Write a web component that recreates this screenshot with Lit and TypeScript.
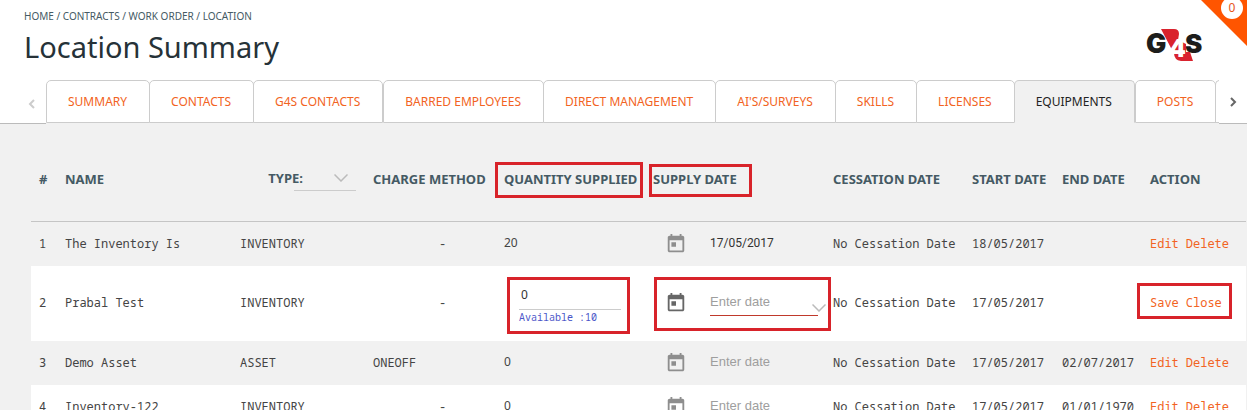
import { LitElement, html, css, nothing } from "lit";
import { customElement, state } from "lit/decorators.js";

interface Equipment {
  name: string;
  type: string;
  charge: string;
  quantity: number;
  supply: string;
  start: string;
  end: string;
  editing?: boolean;
  available?: number;
}

const TABS = [
  "Summary", "Contacts", "G4S Contacts", "Barred Employees", "Direct Management",
  "AI's/Surveys", "Skills", "Licenses", "Equipments", "Posts",
];

const ROWS: Equipment[] = [
  { name: "The Inventory Is", type: "INVENTORY", charge: "", quantity: 20, supply: "17/05/2017", start: "18/05/2017", end: "" },
  { name: "Prabal Test", type: "INVENTORY", charge: "", quantity: 0, supply: "", start: "17/05/2017", end: "", editing: true, available: 10 },
  { name: "Demo Asset", type: "ASSET", charge: "ONEOFF", quantity: 0, supply: "", start: "17/05/2017", end: "02/07/2017" },
  { name: "Inventory-122", type: "INVENTORY", charge: "", quantity: 0, supply: "", start: "17/05/2017", end: "01/01/1970" },
];

const calendar = html`<svg class="cal" viewBox="0 0 24 24" aria-hidden="true">
  <path d="M19 3h-1V1h-2v2H8V1H6v2H5c-1.100 0-2 .9-2 2v14c0 1.100.9 2 2 2h14c1.100 0 2-.9 2-2V5c0-1.100-.9-2-2-2zm0 16H5V8h14v11zM7 10h5v5H7z"/>
</svg>`;

const chevron = html`<svg class="chev" viewBox="0 0 14 8" aria-hidden="true"><path d="M.5.5 7 7 13.500.5"/></svg>`;

@customElement("g4s-logo")
export class G4sLogo extends LitElement {
  static styles = css`
    :host { display: block; width: 56px; height: 34px; }
    svg { display: block; width: 100%; height: 100%; overflow: visible; }
    .letter { font-family: Inter, "Liberation Sans", sans-serif; font-weight: 900; }
    .dark { fill: #1d1d1b; }
    .red { fill: #d9232e; }
    .white { fill: #fff; }
  `;
  render() {
    return html`<svg viewBox="0 0 56 34" role="img" aria-label="G4S">
      <text class="letter dark" x="-1" y="25" font-size="27">G</text>
      <text class="letter dark" x="38" y="25" font-size="26">S</text>
      <path class="red" d="M14 1H27Q32 1 32 6L31 12 39 16V24H43L46 33H34Q27 32 27 25L24 20Z"/>
      <text class="letter white" x="22" y="29" font-size="24">4</text>
    </svg>`;
  }
}

@customElement("app-root")
export class AppRoot extends LitElement {
  @state() private active = "Equipments";

  static styles = css`
    :host {
      display: flex;
      flex-direction: column;
      height: 100vh;
      overflow: hidden;
      background: #fff;
      font-family: "Noto Sans", sans-serif;
      color: #333;
    }
    * { box-sizing: border-box; }
    a { color: inherit; text-decoration: none; }
    header {
      position: relative;
      display: flex;
      justify-content: space-between;
      height: 80px;
      flex: none;
      padding: 8px 44px 0 24px;
    }
    .crumbs { font-size: 10px; line-height: 16px; color: #455a64; text-transform: uppercase; }
    h1 { margin: 0; font-size: 29px; line-height: 46px; font-weight: 400; color: #263238; white-space: nowrap; }
    g4s-logo { margin-top: 20px; }
    .corner { position: absolute; top: 0; right: 0; width: 46px; height: 46px; background: #ff5500; clip-path: polygon(0 0, 100% 0, 100% 100%); }
    .badge { position: absolute; top: -3px; right: 4px; width: 22px; height: 22px; padding: 0; border: 0; border-radius: 50%; background: #fff; color: #e65419; font: 12px/22px "Noto Sans", sans-serif; text-align: center; }

    .strip { display: flex; height: 44px; flex: none; }
    .arrow { width: 46px; flex: none; border: 0; border-bottom: 1px solid #bbb; background: #fff; padding: 4px 0 0 16px; display: flex; align-items: center; justify-content: center; }
    .arrow.next { width: 28px; padding: 0; }
    .arrow svg { width: 7px; height: 10px; fill: none; stroke: #666; stroke-width: 2; }
    .arrow.prev svg { stroke: #ccc; }
    .tabs { display: flex; flex: 1; min-width: 0; overflow: hidden; background: linear-gradient(#fff 43px, #f1f1f1 43px); }
    .tab { flex: none; height: 43px; padding: 0 22px 0 21px; border: 1px solid #ccc; margin-right: -1px; border-radius: 5px 5px 0 0; background: #fff; color: #f26322; font: 12px/41px "Noto Sans", sans-serif; text-transform: uppercase; white-space: nowrap; }
    .tab.on { background: #f1f1f1; border-bottom-color: #f1f1f1; color: #222; }
    .tab.on + .tab, .tab:nth-child(4) { margin-left: 1px; }
    .more { flex: 1 0 20px; height: 43px; border: 1px solid #ccc; border-right: 0; border-radius: 5px 0 0 0; }

    main { flex: 1; min-height: 0; overflow: hidden; background: #f1f1f1; padding: 13px 1px 0 31px; }
    table { width: 100%; table-layout: fixed; border-collapse: separate; border-spacing: 0; }
    th, td { padding: 0 0 0 8px; text-align: left; vertical-align: middle; white-space: nowrap; }
    th { height: 85px; border-bottom: 1px solid #c5c5c5; font-size: 13px; line-height: 20px; font-weight: 700; color: #455a64; text-transform: uppercase; }
    td { height: 44px; font: 12px/20px "Noto Sans Mono", "DejaVu Sans Mono", monospace; color: #444; }
    tbody tr:nth-child(even) td { background: #fff; }
    .editing td { height: 75px; padding-bottom: 1px; }
    .c-num { width: 26px; } .c-type { width: 133px; } .c-charge { width: 131px; } .c-qty { width: 149px; }
    .c-supply { width: 180px; } .c-cess { width: 139px; } .c-start { width: 90px; } .c-end { width: 88px; } .c-act { width: 104px; }
    .dash { padding-left: 74px; }

    .typehead { display: flex; justify-content: flex-end; padding-right: 9px; }
    .pick { position: relative; display: flex; width: 62px; margin-left: -9px; border-bottom: 1px solid #ccc; }
    select { width: 100%; border: 0; background: none; appearance: none; height: 22px; padding: 0; outline: 0; }
    .chev { flex: none; width: 14px; height: 8px; fill: none; stroke: #bbb; stroke-width: 1.500; pointer-events: none; }
    .pick .chev { position: absolute; right: 8px; top: 6px; }

    .qty { padding-bottom: 2px; font: 12px/20px "Noto Sans", sans-serif; }
    .editing .qty { padding-bottom: 0; }
    .edit { width: 102px; margin-left: 15px; }
    .edit input { display: block; width: 100%; height: 26px; border: 0; border-bottom: 1px solid #ccc; padding: 0 2px 4px; background: none; font: 12px/20px "Noto Sans", sans-serif; color: #333; }
    .hint { display: block; font: 10px/14px "Noto Sans Mono", "DejaVu Sans Mono", monospace; color: #4a55c8; }
    .supply { display: flex; align-items: center; height: 26px; padding-left: 12px; }
    .supply input { width: 108px; flex: none; height: 26px; margin-left: 23px; border: 0; border-bottom: 1px solid transparent; padding: 0 0 1px; background: none; outline: 0; font: 12px/20px Roboto, sans-serif; color: #333; }
    .supply input::placeholder { color: #9e9e9e; opacity: 1; font: 13px/20px "Liberation Sans", sans-serif; }
    .supply .chev { margin: 10px 0 0 -6px; }
    .cal { width: 22px; height: 22px; flex: none; fill: #8e8e8e; }
    .editing .cal { fill: #666; }
    .editing .supply input { border-bottom-color: #c0392b; }
    .acts { display: inline-flex; gap: 7px; color: #f26322; }

    .mark { position: relative; }
    .mark::after { content: ""; position: absolute; border: 3px solid #d8232a; pointer-events: none; }
    .m-qty::after { inset: -8px -6px -10px -9px; }
    .m-date::after { inset: -6px -15px -9px -4px; }
    .edit.mark::after { inset: -7px -9px -10px -12px; }
    .supply.mark::after { inset: -13px -6px -15px 1px; }
    .acts.mark::after { inset: -10px -10px -6px -13px; }
  `;

  private row(r: Equipment, i: number) {
    return html`<tr class=${r.editing ? "editing" : ""}>
      <td>${i + 1}</td>
      <td>${r.name}</td>
      <td>${r.type}</td>
      <td class=${r.charge ? "" : "dash"}>${r.charge || "-"}</td>
      <td class="qty">${r.editing
        ? html`<div class="edit mark"><input aria-label="Quantity supplied" .value=${String(r.quantity)} /><span class="hint">Available :${r.available}</span></div>`
        : r.quantity}</td>
      <td><div class="supply ${r.editing ? "mark" : ""}">${calendar}<input aria-label="Supply date" placeholder="Enter date" .value=${r.supply} />${r.editing ? chevron : nothing}</div></td>
      <td>No Cessation Date</td>
      <td>${r.start}</td>
      <td>${r.end}</td>
      <td>${r.editing
        ? html`<span class="acts mark"><a href="#save">Save</a><a href="#close">Close</a></span>`
        : html`<span class="acts"><a href="#edit">Edit</a><a href="#delete">Delete</a></span>`}</td>
    </tr>`;
  }

  render() {
    return html`
      <header>
        <div>
          <nav class="crumbs"><a href="#home">Home</a> / <a href="#contracts">Contracts</a> / <a href="#order">Work Order</a> / <a href="#location">Location</a></nav>
          <h1>Location Summary</h1>
        </div>
        <g4s-logo></g4s-logo>
        <div class="corner"></div>
        <button class="badge" aria-label="Notifications">0</button>
      </header>
      <div class="strip">
        <button class="arrow prev" aria-label="Previous tabs"><svg viewBox="0 0 7 10"><path d="M6 1 2 5 6 9"/></svg></button>
        <div class="tabs" role="tablist">
          ${TABS.map((t) => html`<button class="tab ${t === this.active ? "on" : ""}" role="tab" aria-selected=${t === this.active} @click=${() => (this.active = t)}>${t}</button>`)}
          <div class="more"></div>
        </div>
        <button class="arrow next" aria-label="Next tabs"><svg viewBox="0 0 7 10"><path d="M1 1 5 5 1 9"/></svg></button>
      </div>
      <main>
        <table>
          <colgroup><col class="c-num" /><col /><col class="c-type" /><col class="c-charge" /><col class="c-qty" /><col class="c-supply" /><col class="c-cess" /><col class="c-start" /><col class="c-end" /><col class="c-act" /></colgroup>
          <thead><tr>
            <th>#</th><th>Name</th>
            <th><div class="typehead"><label for="type">Type:</label><div class="pick"><select id="type"><option></option><option>Asset</option></select>${chevron}</div></div></th>
            <th>Charge Method</th>
            <th><span class="mark m-qty">Quantity Supplied</span></th>
            <th><span class="mark m-date">Supply Date</span></th>
            <th>Cessation Date</th><th>Start Date</th><th>End Date</th><th>Action</th>
          </tr></thead>
          <tbody>${ROWS.map((r, i) => this.row(r, i))}</tbody>
        </table>
      </main>`;
  }
}
